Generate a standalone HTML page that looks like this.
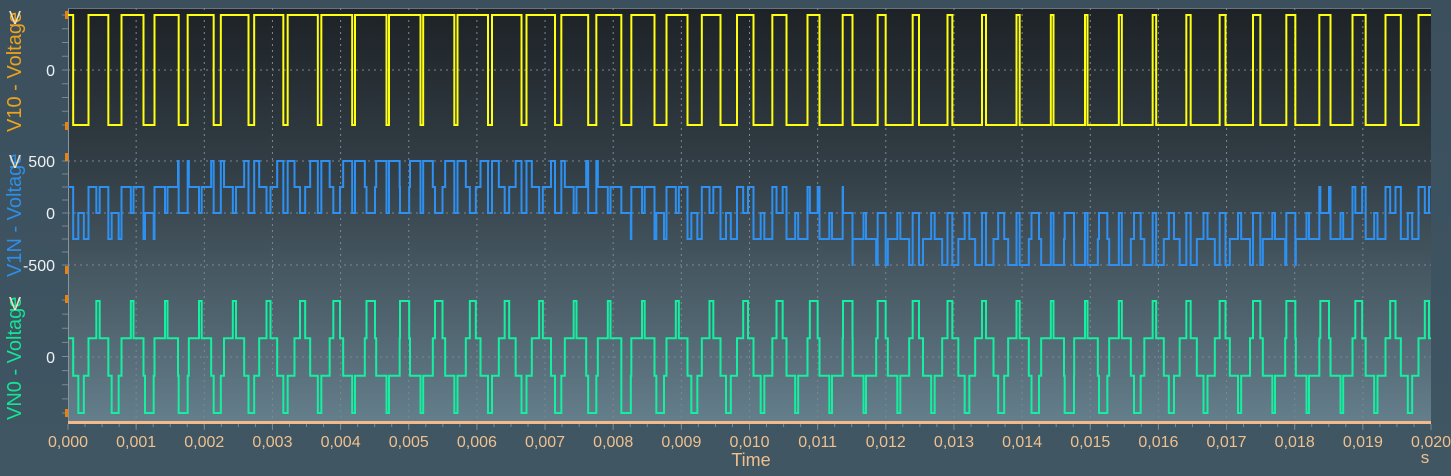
<!DOCTYPE html>
<html><head><meta charset="utf-8"><style>
html,body{margin:0;padding:0;width:1451px;height:476px;overflow:hidden;background:#3e5361;font-family:"Liberation Sans",sans-serif}
</style></head><body>
<svg id="s" width="1451" height="476" xmlns="http://www.w3.org/2000/svg" style="position:absolute;left:0;top:0">
<defs>
<linearGradient id="bg" x1="0" y1="0" x2="0" y2="1"><stop offset="0" stop-color="#3b4f5d"/><stop offset="1" stop-color="#405663"/></linearGradient>
<linearGradient id="pg" x1="0" y1="0" x2="0" y2="1"><stop offset="0" stop-color="#1d2226"/><stop offset="0.4" stop-color="#333f47"/><stop offset="1" stop-color="#647e8b"/></linearGradient>
</defs>
<rect width="1451" height="476" fill="url(#bg)"/>
<rect x="68" y="8" width="1363" height="414" fill="url(#pg)"/>
<line x1="68.5" y1="8" x2="68.5" y2="422" stroke="#8a949a" stroke-width="1"/>
<line x1="68" y1="8.5" x2="1431" y2="8.5" stroke="#6a747a" stroke-width="1"/>
<g id="grid" stroke="#7d8890" stroke-width="1" stroke-dasharray="2,4"></g>
<g id="ticks" stroke="#7d8890" stroke-width="1"></g>
<g id="waves" fill="none" stroke-width="2"></g>
<rect x="68" y="421" width="1363" height="3" fill="#f3b98a"/>
<g id="xl" font-size="16" fill="#f0c08e" text-anchor="middle"></g>
<text x="751" y="466" font-size="18" fill="#f0c08e" text-anchor="middle">Time</text>
<text x="1425" y="463" font-size="17" fill="#f0c08e" text-anchor="middle">s</text>
<g font-size="16" fill="#eef2f4" text-anchor="end">
<text x="55" y="76">0</text>
<text x="55" y="167">500</text>
<text x="55" y="219">0</text>
<text x="55" y="271">-500</text>
<text x="55" y="363">0</text>
</g>
<text transform="translate(21,132) rotate(-90)" font-size="20" fill="#f0a21a">V10 - Voltage</text>
<text transform="translate(21,277) rotate(-90)" font-size="20" fill="#2e8fe8">V1N - Voltage</text>
<text transform="translate(21,420) rotate(-90)" font-size="20" fill="#12e596">VN0 - Voltage</text>
<g font-size="18" fill="#f0e0c0">
<text x="9" y="24">V</text><text x="9" y="168">V</text><text x="9" y="310">V</text>
</g>
<g fill="#e8820e">
<rect x="65" y="11" width="3" height="8"/><rect x="65" y="122" width="3" height="8"/>
<rect x="65" y="153" width="3" height="8"/><rect x="65" y="266" width="3" height="8"/>
<rect x="65" y="295" width="3" height="8"/><rect x="65" y="409" width="3" height="8"/>
</g>
</svg>
<script>
var NS="http://www.w3.org/2000/svg";
function el(p,t,a){var e=document.createElementNS(NS,t);for(var k in a)e.setAttribute(k,a[k]);p.appendChild(e);return e;}
var X0=68,W=1363;
var grid=document.getElementById('grid'),ticks=document.getElementById('ticks'),xl=document.getElementById('xl');
for(var i=1;i<20;i++){var x=X0+W*i/20;el(grid,'line',{x1:x,y1:8,x2:x,y2:421});}
[70,161,213,265,357].forEach(function(y){el(grid,'line',{x1:68,y1:y,x2:1431,y2:y});});
for(var i=0;i<=20;i++){var x=X0+W*i/20;var t=el(xl,'text',{x:x,y:447});t.textContent="0,"+("00"+i).slice(-3);
 el(ticks,'line',{x1:x,y1:424,x2:x,y2:430});}
for(var i=0;i<80;i++){var x=X0+W*i/80;el(ticks,'line',{x1:x,y1:424,x2:x,y2:427});}
[[15,125],[161,265],[300,413]].forEach(function(r){for(var k=0;k<=8;k++){var y=r[0]+(r[1]-r[0])*k/8;el(ticks,'line',{x1:62,y1:y,x2:68,y2:y});}});
var fc=2000,f=50,m=0.85,phi=0.02*Math.PI;
var N=W*6;
function tri(t){var p=(t*fc)%1;return p<0.5?(4*p-1):(3-4*p);}
var s1=[],s2=[],s3=[];
for(var i=0;i<=N;i++){var t=0.02*i/N,c=tri(t+0.00006);
 var a=2*Math.PI*f*t+phi;
 s1.push(m*Math.sin(a)>c?1:-1);
 s2.push(m*Math.sin(a-2*Math.PI/3)>c?1:-1);
 s3.push(m*Math.sin(a+2*Math.PI/3)>c?1:-1);}
function path(vals,ymap,col){var d="",prev=null;
 for(var i=0;i<=N;i++){var x=(X0+W*i/N).toFixed(2),y=ymap(vals[i]).toFixed(1);
  if(prev===null)d+="M"+x+" "+y;else if(y!=prev)d+="L"+x+" "+prev+"L"+x+" "+y;prev=y;}
 d+="L"+(X0+W)+" "+prev;
 el(document.getElementById('waves'),'path',{d:d,stroke:col});}
var vn0=[],v1n=[];
for(var i=0;i<=N;i++){var n=(s1[i]+s2[i]+s3[i])/3;vn0.push(n);v1n.push(s1[i]-n);}
path(s1,function(v){return v>0?15:125;},"#ffff10");
path(v1n,function(v){return 213-v*(52*3/4);},"#2e90f0");
path(vn0,function(v){return 357-v*56;},"#14f0a0");
</script>
</body></html>
